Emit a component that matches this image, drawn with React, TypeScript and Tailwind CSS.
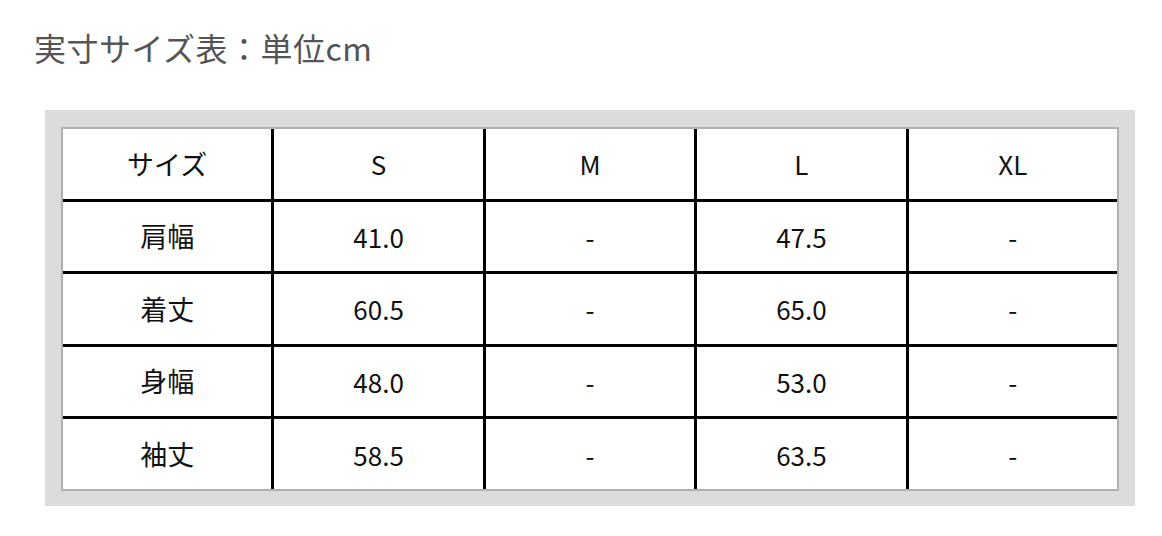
import React from "react";

const rows: string[][] = [
  ["サイズ", "S", "M", "L", "XL"],
  ["肩幅", "41.0", "-", "47.5", "-"],
  ["着丈", "60.5", "-", "65.0", "-"],
  ["身幅", "48.0", "-", "53.0", "-"],
  ["袖丈", "58.5", "-", "63.5", "-"],
];

export default function App() {
  return (
    <div
      className="w-[1162px] h-[536px] bg-white overflow-hidden"
      style={{ fontFamily: '"Noto Sans CJK JP", "Noto Sans", sans-serif' }}
    >
      <div className="pt-[31px] pl-[34px]">
        <h1 className="text-[32px] leading-[32px] text-[#555555] font-normal tracking-[0.5px]">
          実寸サイズ表：単位cm
        </h1>
      </div>
      <div className="mt-[47px] ml-[45px] w-[1090px] bg-[#dcdcdc] pt-[17px] pb-[15px] px-[16px]">
        <div className="border-2 border-[#b0b0b0] bg-white">
          <div className="grid grid-cols-5 grid-rows-5 gap-[3px] bg-black h-[360px]">
            {rows.flatMap((row, ri) =>
              row.map((cell, ci) => (
                <div
                  key={`${ri}-${ci}`}
                  className={
                    ci === 0
                      ? "bg-white flex items-center justify-center text-[27px] text-[#111111]"
                      : "bg-white flex items-center justify-center text-[26px] text-[#111111]"
                  }
                >
                  {cell}
                </div>
              ))
            )}
          </div>
        </div>
      </div>
    </div>
  );
}
